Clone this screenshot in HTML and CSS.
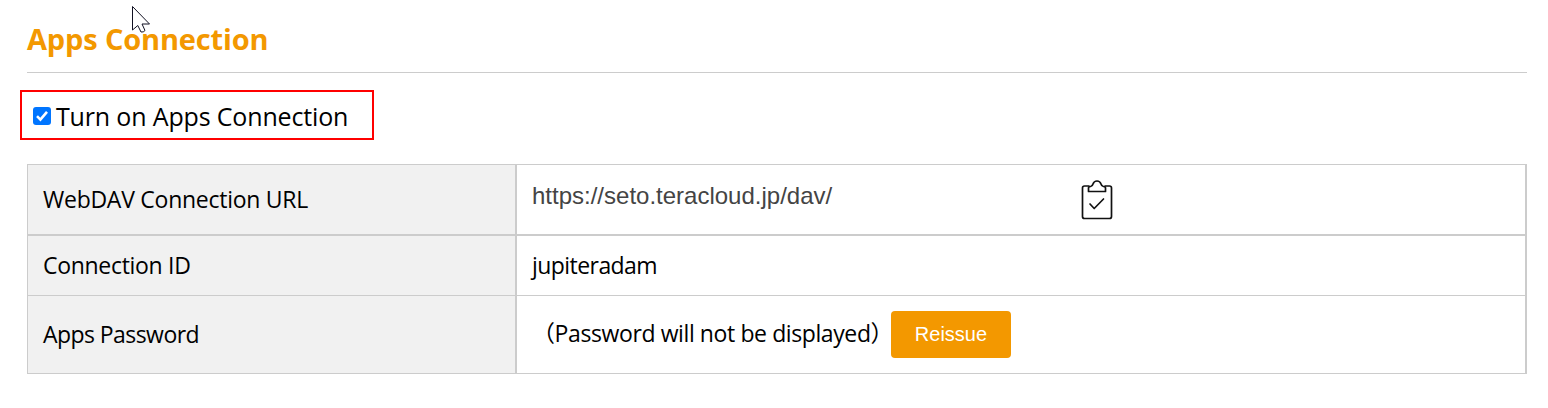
FILE: index.html
```html
<!DOCTYPE html>
<html lang="en">
<head>
    <meta charset="UTF-8">
    <meta name="viewport" content="width=device-width, initial-scale=1.0">
    <title>Apps Connection</title>
    <link rel="stylesheet" href="styles.css">
</head>
<body>
    <div class="main">
        <h2 class="title">Apps Connection</h2>
        <label class="toggle">
            <input type="checkbox" class="check" checked>
            <svg class="tick" viewBox="0 0 18 18"><path d="M4 9.2 L7.4 12.6 L14 4.8"/></svg>
            <span class="toggle-text">Turn on Apps Connection</span>
        </label>
        <table class="info">
            <tr class="row-url">
                <th><span class="t-url">WebDAV Connection URL</span></th>
                <td>
                    <div class="url">
                        <input type="text" class="url-input" value="https://seto.teracloud.jp/dav/" readonly>
                        <svg class="copy" viewBox="0 0 32 40">
                            <path d="M8 6H3.500Q1.500 6 1.500 8V36.500Q1.500 38.500 3.500 38.500H28.500Q30.500 38.500 30.500 36.500V8Q30.500 6 28.500 6H24"/>
                            <path d="M7.500 11.500V8Q7.500 6.500 9.500 6.500Q11.500 6 12 4Q13 1 16 1Q19 1 20 4Q20.500 6 22.500 6.500Q24.500 6.500 24.500 8V11.500Z"/>
                            <path d="M9 24L13.200 28.500L22.500 19"/>
                        </svg>
                    </div>
                </td>
            </tr>
            <tr class="row-id">
                <th><span class="t-id">Connection ID</span></th>
                <td><span class="t-user">jupiteradam</span></td>
            </tr>
            <tr class="row-pass">
                <th><span class="t-pass">Apps Password</span></th>
                <td>
                    <div class="pass">
                        <span class="t-note"><span class="paren">（</span>Password will not be displayed<span class="paren">）</span></span>
                        <button type="button" class="reissue">Reissue</button>
                    </div>
                </td>
            </tr>
        </table>
    </div>
    <svg class="cursor" viewBox="0 0 20 28"><path d="M1.500 1.500V25L6.800 20.500L10 27Q12.500 27.500 14 25.500L11 19H18.500Z"/></svg>
</body>
</html>
```

FILE: styles.css
```css
*{
    box-sizing: border-box;
}
body{
    margin: 0;
    background-color: #fff;
    color: #000;
    font-family: "Open Sans", "Noto Sans CJK JP", sans-serif;
}
.main{
    width: 1500px;
    margin-left: 27px;
}
.title{
    height: 73px;
    margin: 0;
    padding-top: 19px;
    border-bottom: 1px solid #ccc;
    color: #f39800;
    font-size: 29px;
    line-height: 40px;
    font-weight: 700;
    letter-spacing: -0.15px;
}
.toggle{
    display: flex;
    align-items: center;
    position: relative;
    width: 354px;
    height: 50px;
    margin: 17px 0 24px -7px;
    padding: 2px 0 0 11px;
    border: 2px solid #f00;
    font-size: 25px;
    letter-spacing: -0.16px;
}
.check{
    appearance: none;
    width: 18px;
    height: 18px;
    margin: 0 5px 0 0;
    border-radius: 3px;
    background-color: #0075ff;
}
.tick{
    position: absolute;
    left: 11px;
    top: 15px;
    width: 18px;
    height: 18px;
    fill: none;
    stroke: #fff;
    stroke-width: 2.6;
}
.info{
    width: 1500px;
    table-layout: fixed;
    border-collapse: separate;
    border-spacing: 0;
    font-size: 23px;
    line-height: 32px;
}
th, td{
    padding: 0 15px 2px;
    border: 0 solid #ccc;
    border-right-width: 2px;
    border-bottom-width: 1px;
    text-align: left;
    font-weight: 400;
}
th{
    width: 490px;
    border-left-width: 1px;
    background-color: #f1f1f1;
}
.row-url{
    height: 72px;
}
.row-url th, .row-url td{
    border-top-width: 1px;
    border-bottom-width: 2px;
}
.row-id{
    height: 60px;
}
.row-pass{
    height: 78px;
}
.row-url td, .row-pass td{
    padding-bottom: 0;
}
.t-url{
    letter-spacing: -0.26px;
}
.t-id{
    letter-spacing: -0.3px;
}
.t-pass{
    letter-spacing: -0.56px;
}
.t-user{
    letter-spacing: -0.56px;
}
.url{
    display: flex;
    align-items: center;
}
.url-input{
    width: 549px;
    padding: 0 0 8px;
    border: none;
    outline: none;
    color: #444;
    font-family: "Liberation Sans", Arial, sans-serif;
    font-size: 24px;
}
.copy{
    width: 32px;
    height: 40px;
    fill: none;
    stroke: #111;
    stroke-width: 1.7;
    stroke-linejoin: round;
    stroke-linecap: round;
}
.pass{
    display: flex;
    align-items: center;
}
.t-note{
    width: 359px;
    padding-bottom: 4px;
    white-space: nowrap;
    letter-spacing: -0.4px;
}
.paren{
    font-family: "Noto Sans CJK JP", sans-serif;
}
.reissue{
    width: 120px;
    height: 47px;
    border: none;
    border-radius: 4px;
    background-color: #f39800;
    color: #fff;
    font-family: "Liberation Sans", Arial, sans-serif;
    font-size: 20px;
}
.cursor{
    position: absolute;
    left: 131px;
    top: 5px;
    width: 20px;
    height: 28px;
    fill: #fff;
    stroke: #112;
    stroke-width: 1;
}
```
